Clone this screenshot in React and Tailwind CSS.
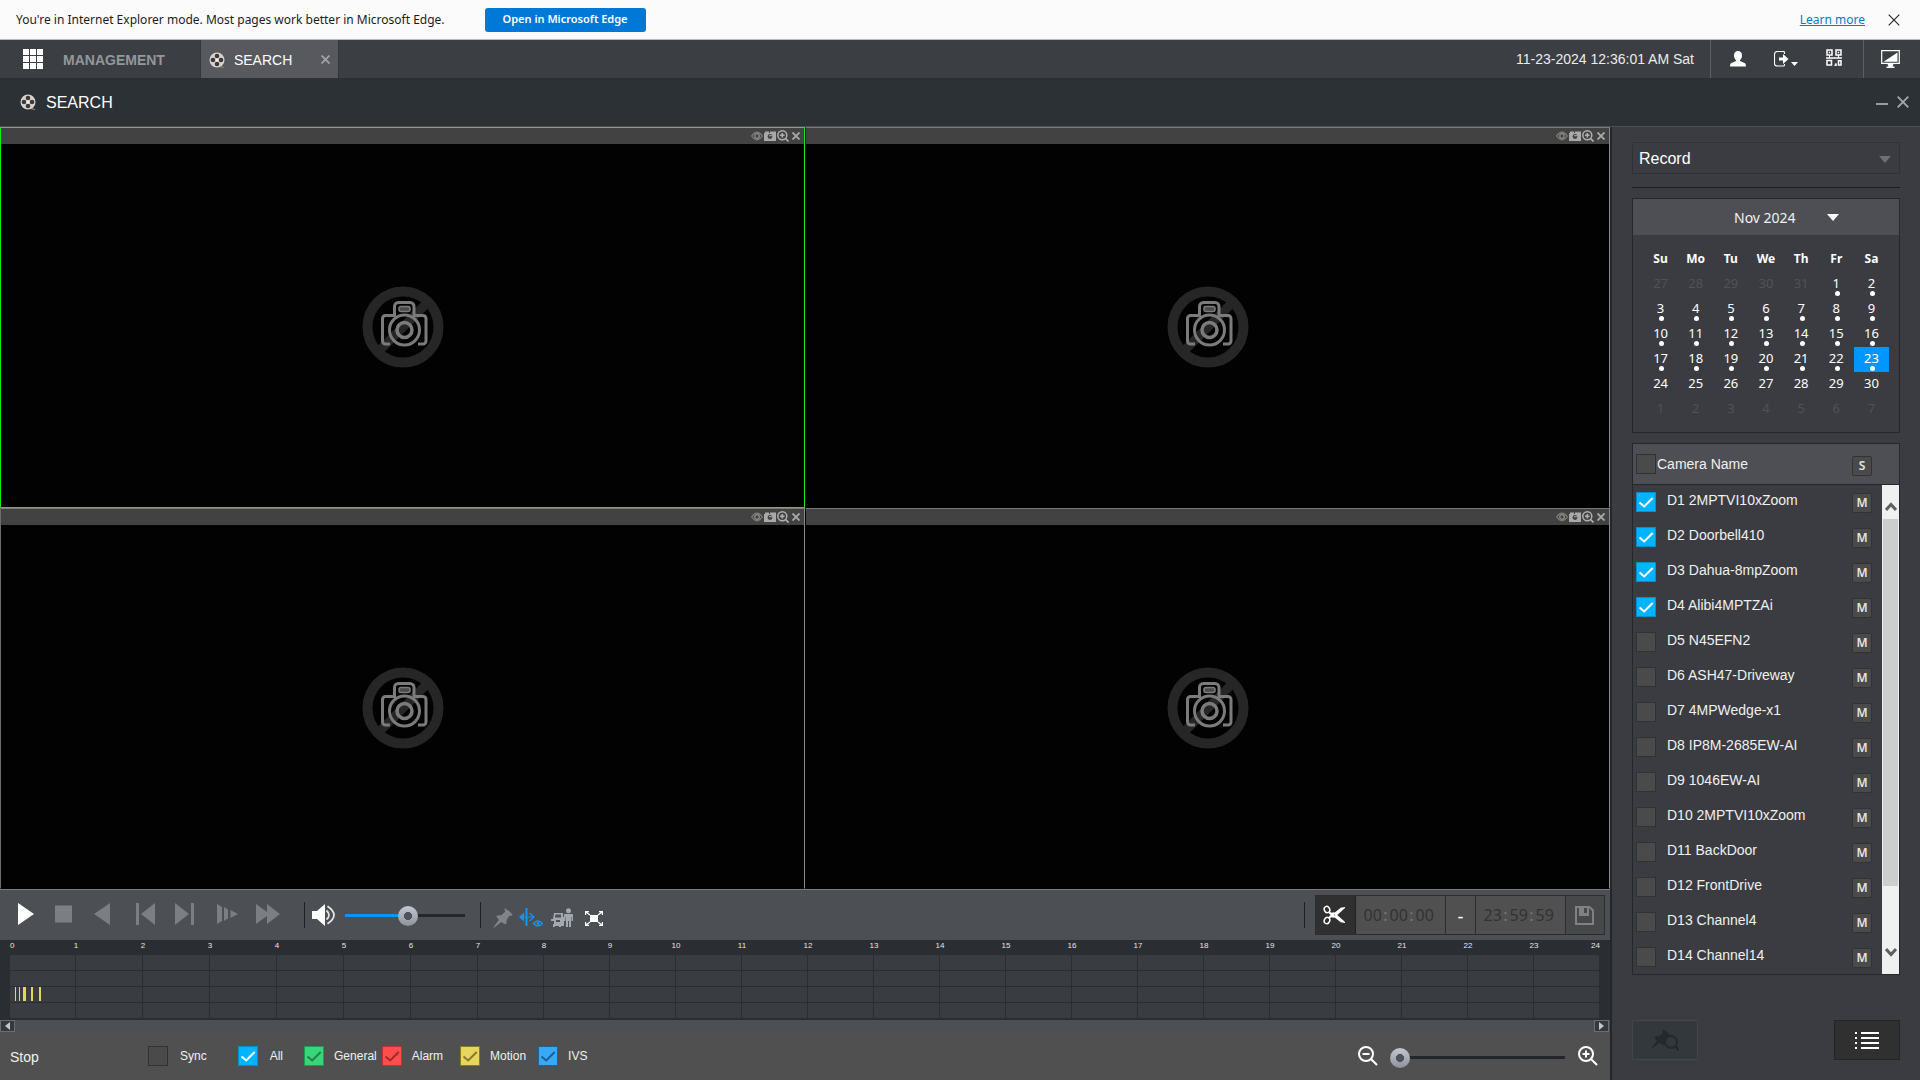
import React, { useState } from "react";

const CAMERAS = [
  "D1 2MPTVI10xZoom",
  "D2 Doorbell410",
  "D3 Dahua-8mpZoom",
  "D4 Alibi4MPTZAi",
  "D5 N45EFN2",
  "D6 ASH47-Driveway",
  "D7 4MPWedge-x1",
  "D8 IP8M-2685EW-AI",
  "D9 1046EW-AI",
  "D10 2MPTVI10xZoom",
  "D11 BackDoor",
  "D12 FrontDrive",
  "D13 Channel4",
  "D14 Channel14",
];

const WEEKS = [
  [27, 28, 29, 30, 31, 1, 2],
  [3, 4, 5, 6, 7, 8, 9],
  [10, 11, 12, 13, 14, 15, 16],
  [17, 18, 19, 20, 21, 22, 23],
  [24, 25, 26, 27, 28, 29, 30],
  [1, 2, 3, 4, 5, 6, 7],
];

const HOURS = Array.from({ length: 24 }, (_, i) => i);

function ReelIcon() {
  return (
    <svg width="17" height="17" viewBox="0 0 17 17" aria-hidden="true">
      <path d="M12 13.5l3.6 2.2-.6.6-4-1z" fill="#8d7a68" />
      <circle cx="8" cy="8" r="7.5" fill="#d4d4d4" />
      <g fill="#443630">
        <circle cx="8" cy="4" r="2.3" />
        <circle cx="8" cy="12" r="2.3" />
        <circle cx="4" cy="8" r="2.3" />
        <circle cx="12" cy="8" r="2.3" />
      </g>
      <circle cx="8" cy="8" r="1.5" fill="#f4f4f4" />
    </svg>
  );
}

function Cross({ size, width, className }) {
  return (
    <svg width={size} height={size} viewBox="0 0 12 12" className={className} aria-hidden="true">
      <path d="M.7 .7L11.3 11.3M11.3 .7L.7 11.3" stroke="currentColor" strokeWidth={width} fill="none" />
    </svg>
  );
}

function PinShape() {
  return (
    <path d="M11 .5c2 .1 6 2.600 8.500 6.500l-1.600 1-1.300-.4-3 4.500c.4 2-.2 3.600-1.200 4.400L8.200 14 1 19.800.4 19.300 5.800 12 3.300 8.300c1.300-1 3-1.200 4.700-.7l4.100-3.900-.2-1.400z" />
  );
}

function Check({ id, label, checked, box = "checked:bg-[#00b4ff] checked:border-[#0090cc]", tick = "#ffffff" }) {
  const [on, setOn] = useState(!!checked);
  return (
    <span className="grid size-5 shrink-0">
      <input
        id={id}
        type="checkbox"
        aria-label={label}
        checked={on}
        onChange={() => setOn(!on)}
        className={"col-start-1 row-start-1 size-5 appearance-none border border-[#323232] bg-[#4a4a4a] " + box}
      />
      {on && (
        <svg viewBox="0 0 20 20" className="pointer-events-none col-start-1 row-start-1 size-5" aria-hidden="true">
          <path d="M3.500 10.500l4.700 4 8.500-8.500" fill="none" stroke={tick} strokeWidth="2" />
        </svg>
      )}
    </span>
  );
}

function NoVideo() {
  return (
    <svg width="82" height="82" viewBox="0 0 82 82" aria-hidden="true">
      <circle cx="41" cy="41" r="35.500" fill="none" stroke="#262626" strokeWidth="10" />
      <path d="M17 65L66 16" stroke="#262626" strokeWidth="9" />
      <g fill="none" stroke="#7b7b7b" strokeWidth="3">
        <path d="M28 58h-4.500a3 3 0 0 1-3-3V32.500a3 3 0 0 1 3-3h9v-9a4 4 0 0 1 4-4h11.500a4 4 0 0 1 4 4v9h9a3 3 0 0 1 3 3V55a3 3 0 0 1-3 3H56" />
        <rect x="37" y="20.500" width="11" height="5" rx="2" fill="#4b4b4b" strokeWidth="1.500" />
        <circle cx="42.500" cy="44" r="15" />
        <circle cx="42.500" cy="44" r="7.500" strokeWidth="3.500" />
      </g>
    </svg>
  );
}

function VideoCell({ active, edge = "border-l-[#020202]" }) {
  return (
    <section
      className={
        "flex min-h-0 flex-col border bg-[#020202] " +
        (active ? "border-[#12f012]" : "border-t-[#78787a] border-r-[#8a8a8a] border-b-[#020202] " + edge)
      }
    >
      <header className="flex h-4 shrink-0 items-center justify-end gap-px bg-[#424242] pr-1 text-[#a0a0a0]">
        <button aria-label="Fisheye">
          <svg width="12" height="10" viewBox="0 0 12 10" className="block">
            <path d="M.6 5Q6-2.600 11.400 5 6 12.600.6 5z" fill="none" stroke="#7c7c7c" strokeWidth="1.200" />
            <circle cx="6" cy="5" r="2.300" fill="none" stroke="#8f8f7c" strokeWidth="1.300" />
          </svg>
        </button>
        <button aria-label="Snapshot">
          <svg width="12" height="10" viewBox="0 0 12 10" className="block">
            <path d="M0 2h1V.5h4V2h1V.5h6V10H0z" fill="#a9a9a9" />
            <circle cx="6" cy="5.500" r="2.400" fill="#424242" />
            <path d="M5 4.200h3v1H5z" fill="#a9a9a9" />
          </svg>
        </button>
        <button aria-label="Zoom">
          <svg width="12" height="12" viewBox="0 0 12 12" className="block">
            <circle cx="5.300" cy="5.300" r="4.500" fill="none" stroke="#b0b0b0" strokeWidth="1.500" />
            <path d="M3 5.300h4.600M5.300 3v4.600M8.500 8.500l3 3" stroke="#b0b0b0" strokeWidth="1.600" />
          </svg>
        </button>
        <button aria-label="Close" className="pl-[2px]">
          <Cross size={8} width={2.8} className="block text-[#a9a9a9]" />
        </button>
      </header>
      <div className="flex flex-1 items-center justify-center pt-[3px]">
        <NoVideo />
      </div>
    </section>
  );
}

function EdgeBar() {
  return (
    <div className="flex h-10 shrink-0 items-center border-b border-[#b9b9b9] bg-[#fbfbfb] pl-4 font-['Noto_Sans',sans-serif] text-[12px] text-[#1b1b1b]">
      <span>You're in Internet Explorer mode. Most pages work better in Microsoft Edge.</span>
      <button className="ml-10 h-6 w-[161px] rounded-[3px] bg-[#0078d7] text-[11px] font-semibold text-white">
        Open in Microsoft Edge
      </button>
      <a href="#learn" className="ml-auto text-[#0a78c8] underline">
        Learn more
      </a>
      <button aria-label="Dismiss" className="mr-5 ml-[23px] text-[#222]">
        <Cross size={12} width={1.1} className="block" />
      </button>
    </div>
  );
}

function NavBar() {
  return (
    <nav className="flex h-[38px] shrink-0 items-stretch bg-[#3b3f43] text-[14px]">
      <button aria-label="Menu" className="ml-[23px]">
        <svg width="20" height="20" viewBox="0 0 20 20" fill="#fff">
          {[0, 7, 14].map((y) => [0, 7, 14].map((x) => <rect key={x + "-" + y} x={x} y={y} width="6" height="6" />))}
        </svg>
      </button>
      <button className="ml-5 pt-0.5 font-bold text-[#92979b]">MANAGEMENT</button>
      <div className="ml-[35px] flex w-[139px] items-center border-r border-l border-[#33363a] bg-[#58595e] px-2 pt-0.5">
        <ReelIcon />
        <span className="ml-2 text-white">SEARCH</span>
        <button aria-label="Close tab" className="mb-0.5 ml-auto text-[#a2a3a6]">
          <Cross size={9} width={2.4} className="block" />
        </button>
      </div>
      <time className="ml-auto self-center pr-4 text-[#ececec]">11-23-2024 12:36:01 AM Sat</time>
      <div className="flex w-[153px] items-center justify-between border-l border-[#5c6064] pr-[21px] pl-[19px]">
        <button aria-label="User">
          <svg width="16" height="16" viewBox="0 0 16 16" fill="#fff" className="block">
            <path d="M8 0c2.500 0 4 1.700 4 4.200 0 2.400-1 4.100-2 4.900v1l5 2.200c.7.500 1 1.500 1 3.200H0c0-1.700.3-2.700 1-3.200l5-2.200v-1C5 8.300 4 6.600 4 4.200 4 1.700 5.500 0 8 0z" />
          </svg>
        </button>
        <button aria-label="Log out">
          <svg width="24" height="16" viewBox="0 0 24 16" className="block">
            <path d="M10.500 3V1.500q0-1-1-1h-6q-3 0-3 3v9q0 2.500 3 2.500h6q1 0 1-1v-1" fill="none" stroke="#fff" strokeWidth="1.100" />
            <path d="M5 6.500h4V3l5.500 5L9 13V9.500H5zM17 11h7l-3.500 4z" fill="#fff" />
          </svg>
        </button>
        <button aria-label="QR code" className="mb-1">
          <svg width="16" height="17" viewBox="0 0 16 17" className="block" fill="none" stroke="#fff" strokeWidth="1.500">
            <path d="M1 1h5v5H1zM10 1h5v5h-5zM1 11.500h4.500V16H1zM0 9h16M8.500 16.200h1.500v-2M12.500 11.700H15V16h-2.500z" />
            <path d="M2.700 2.700h1.500v1.500H2.700zM11.700 2.700h1.500v1.500h-1.500z" fill="#fff" stroke="none" />
            <path d="M3.500 6v3M12.500 6v3" strokeWidth="1" />
          </svg>
        </button>
      </div>
      <button aria-label="Display" className="border-l border-[#5c6064] pr-5 pl-[17px]">
        <svg width="19" height="19" viewBox="0 0 19 19" className="block">
          <path d="M.7.7h17.600v12.600H.7z" fill="none" stroke="#fff" strokeWidth="1.200" />
          <path d="M16.500 2.500v9.300h-14zM6.500 14h6l-1 2.500h2V18h-8v-1.500h2z" fill="#fff" />
        </svg>
      </button>
    </nav>
  );
}

function TitleBar() {
  return (
    <div className="flex h-12 shrink-0 items-center bg-[#2c3135] pl-5">
      <ReelIcon />
      <h1 className="ml-[9px] pt-0.5 text-[16px] text-white">SEARCH</h1>
      <button aria-label="Minimize" className="mt-1 ml-auto">
        <svg width="12" height="2" className="block">
          <rect width="12" height="2" fill="#9a9ca0" />
        </svg>
      </button>
      <button aria-label="Close" className="mr-[11px] ml-[9px] text-[#a4a6a9]">
        <Cross size={12} width={1.9} className="block" />
      </button>
    </div>
  );
}

function IconButton({ label, w, h = 22, className = "", fill = "#7b7e82", children }) {
  return (
    <button aria-label={label} className={"shrink-0 " + className}>
      <svg width={w} height={h} viewBox={"0 0 " + w + " " + h} fill={fill} className="block">
        {children}
      </svg>
    </button>
  );
}

const SLIDER =
  "h-5 appearance-none bg-transparent [&::-webkit-slider-runnable-track]:h-[3px] [&::-webkit-slider-thumb]:-mt-2 [&::-webkit-slider-thumb]:size-5 [&::-webkit-slider-thumb]:appearance-none [&::-webkit-slider-thumb]:rounded-full [&::-webkit-slider-thumb]:bg-[radial-gradient(circle,#4d525d_0_4px,transparent_4px),linear-gradient(#c3c7cf,#8d929c)]";

function TimeField({ label, value }) {
  const parts = value.split(":");
  return (
    <div role="group" aria-label={label} className="flex w-[90px] items-center justify-center border-r border-[#2b2d30] pr-1 font-['Noto_Sans',sans-serif] text-[16px]">
      {parts.map((p, i) => (
        <React.Fragment key={i}>
          {i > 0 && <span className="w-2 text-center text-[#787878]">:</span>}
          <input aria-label={label + " part " + (i + 1)} defaultValue={p} className="w-[18px] bg-transparent text-center text-[#333]" />
        </React.Fragment>
      ))}
    </div>
  );
}

function Controls() {
  return (
    <div className="flex h-[50px] shrink-0 items-center bg-[#4c5055] pr-[5px] pl-[18px]">
      <div className="mt-[-3px] flex items-center">
        <IconButton label="Play" w={16} fill="#fff"><path d="M0 0l16 11L0 22z" /></IconButton>
        <IconButton label="Stop" w={17} className="ml-[21px]"><path d="M0 2.500h17v17H0z" /></IconButton>
        <IconButton label="Play backward" w={16} className="ml-[22px]"><path d="M16 0L0 11l16 11z" /></IconButton>
        <IconButton label="Previous frame" w={19} className="ml-[26px]"><path d="M0 0h3v22H0zM19 0L5 11l14 11z" /></IconButton>
        <IconButton label="Next frame" w={19} className="ml-5"><path d="M16 0h3v22h-3zM0 0l14 11L0 22z" /></IconButton>
        <IconButton label="Slow" w={21} className="ml-[23px]"><path d="M0 1l5 3v14l-5 3zM7 4l4 2.500v9L7 18zM13.500 7l7.500 4-7.500 4z" /></IconButton>
        <IconButton label="Fast" w={24} className="ml-[18px]"><path d="M0 1l11 8V1l13 10-13 10v-8L0 21z" /></IconButton>
      </div>
      <div className="ml-6 h-[26px] w-px bg-[#1e2024]" />
      <IconButton label="Mute" w={24} className="ml-[7px]" fill="#fff">
        <path d="M0 7h5l8-7v22l-8-7H0z" />
        <path d="M14.500 6.500q5 4.500 0 9M15.500 2.200q13 8.800 0 17.600" fill="none" stroke="#e4e4e4" strokeWidth="1.800" />
      </IconButton>
      <input
        type="range"
        aria-label="Volume"
        defaultValue="53"
        className={SLIDER + " ml-[9px] w-[120px] [&::-webkit-slider-runnable-track]:bg-[linear-gradient(to_right,#0096ff_53%,#24272b_53%)]"}
      />
      <div className="ml-[15px] h-[26px] w-px bg-[#1e2024]" />
      <div className="mt-[6px] flex items-center">
        <IconButton label="Mark" w={20} h={20} className="ml-3" fill="#81858b"><PinShape /></IconButton>
        <IconButton label="Fine tune" w={24} h={20} className="ml-[6px]" fill="#0d97f5">
          <path d="M6.500 0h2v18h-2zM0 9l5-4.500v9z" />
          <path d="M4 9h2.500M8.500 9H14M10.500 5l4.500 4-4.500 4" fill="none" stroke="#0d97f5" strokeWidth="1.200" />
          <path d="M14.500 15.500q4.500-5 9 0-4.500 5-9 0z" fill="none" stroke="#0d97f5" strokeWidth="1.500" />
          <circle cx="19" cy="15.500" r="1.500" />
        </IconButton>
        <IconButton label="Target filter" w={23} h={20} className="ml-2" fill="#a3a7b0">
          <path d="M3 5h9v4h1v9h-3v1H8v-1H4v1H2v-3h1v-3H0v-2h2zM4.500 6.500L4 9.500h6v-3zM5 12v2h4v-2z" fillRule="evenodd" />
          <circle cx="17.500" cy="2.700" r="2.500" />
          <path d="M14 6h7q1 0 1 1v6h-1.500V9H20v10h-2v-6h-1v6h-2V9h-.5v4H13V7q0-1 1-1z" />
        </IconButton>
        <IconButton label="Full screen" w={18} h={15} className="ml-[11px]" fill="#fff">
          <path d="M5 4h8v7H5z" />
          <path d="M.6 4V.6H4M14 .6h3.400V4M17.400 11v3.400H14M4 14.400H.6V11M1 1l4 3M17 1l-4 3M17 14l-4-3M1 14l4-3" fill="none" stroke="#fff" strokeWidth="1.200" />
        </IconButton>
      </div>
      <div className="ml-auto h-[26px] w-px bg-[#1e2024]" />
      <div className="ml-[10px] flex h-10 border border-[#2b2d30] bg-[#505050]">
        <button aria-label="Clip" className="flex w-10 items-center justify-center border-r border-[#222] bg-[#303030] pr-1">
          <svg width="22" height="20" viewBox="0 0 22 20" fill="none" stroke="#fff" className="block">
            <ellipse cx="4" cy="4.500" rx="2.700" ry="3.200" strokeWidth="1.500" transform="rotate(-25 4 4.500)" />
            <ellipse cx="4" cy="15.500" rx="2.700" ry="3.200" strokeWidth="1.500" transform="rotate(25 4 15.500)" />
            <path d="M6 7l3 3-3 3" strokeWidth="2" />
            <path d="M8 8.500L18 16.500l3 .5-10-9zM8 11.500L18 3.500l3-.5-10 9z" fill="#fff" strokeWidth="1.500" />
          </svg>
        </button>
        <TimeField label="Start time" value="00:00:00" />
        <span className="flex w-[30px] items-center justify-center border-r border-[#2b2d30] pt-1 text-[18px] text-white">-</span>
        <TimeField label="End time" value="23:59:59" />
        <button aria-label="Save clip" className="flex w-[38px] items-center justify-center bg-[#46484a] pr-[2px]">
          <svg width="19" height="19" viewBox="0 0 19 19" className="block">
            <path d="M1 1h13.500L18 4.500V18H1z" fill="none" stroke="#7f8183" strokeWidth="2" />
            <path d="M4 0h10v10H4zM9 2v5h3V2z" fill="#7f8183" fillRule="evenodd" />
          </svg>
        </button>
      </div>
    </div>
  );
}

const COLS = "grid grid-cols-[66fr_repeat(6,67fr)_repeat(17,66fr)]";

function Timeline() {
  return (
    <div className="h-20 shrink-0 bg-[#2a2d31] px-[10px]">
      <div className={COLS + " h-[15px] text-[8px] leading-[11px] text-[#e6e6e6]"}>
        {HOURS.map((h) => (
          <span key={h} className="flex justify-between">
            <span className={h === 0 ? "" : "-ml-2 w-4 text-center"}>{h}</span>
            {h === 23 && <span>24</span>}
          </span>
        ))}
      </div>
      {[0, 1, 2, 3].map((row) => (
        <div key={row} className={COLS + " relative mb-px h-[15px]"}>
          {HOURS.map((h) => (
            <div key={h} className="border-r border-[#2a2d31] bg-[#393c41]" />
          ))}
          {row === 2 && (
            <div className="absolute inset-y-0 left-[5px] flex h-[14px] text-[#e8d455]">
              <i className="w-px bg-current" />
              <i className="ml-[3px] w-px bg-current" />
              <i className="ml-[3px] w-[3px] bg-current" />
              <i className="ml-[5px] w-[2px] bg-current" />
              <i className="ml-[6px] w-[2px] bg-current" />
            </div>
          )}
        </div>
      ))}
    </div>
  );
}

function TimelineScroll() {
  const box = "flex h-3 w-[15px] items-center justify-center border border-[#6a6d71] bg-[#35383c]";
  return (
    <div className="flex h-3 shrink-0 justify-between bg-[#4c5055] pr-px">
      <button aria-label="Scroll left" className={box}>
        <svg width="5" height="8"><path d="M5 0v8L0 4z" fill="#c4c7ca" /></svg>
      </button>
      <button aria-label="Scroll right" className={box}>
        <svg width="5" height="8"><path d="M0 0v8l5-4z" fill="#c4c7ca" /></svg>
      </button>
    </div>
  );
}

const FILTERS = [
  { name: "All", ml: "ml-[31px]", gap: "ml-3", box: "checked:bg-[#00b4ff] checked:border-[#0090cc]", tick: "#ffffff" },
  { name: "General", ml: "ml-[21px]", gap: "ml-[10px]", box: "checked:bg-[#37d67a] checked:border-[#1f9c54]", tick: "#1f8048" },
  { name: "Alarm", ml: "ml-[5px]", gap: "ml-[10px]", box: "checked:bg-[#ff4d4d] checked:border-[#c23030]", tick: "#9c2b2b" },
  { name: "Motion", ml: "ml-[17px]", gap: "ml-[10px]", box: "checked:bg-[#e8d560] checked:border-[#8a7a1c]", tick: "#857832" },
  { name: "IVS", ml: "ml-3", gap: "ml-[10px]", box: "checked:bg-[#3aa9f5] checked:border-[#1464a0]", tick: "#1a5f95" },
];

function StatusBar() {
  return (
    <footer className="flex h-12 shrink-0 items-center bg-[#505050] pr-3 pl-[10px] text-[12px] text-[#f0f0f0]">
      <output className="w-[138px] pt-0.5 text-[14px]">Stop</output>
      <Check id="f-sync" />
      <label htmlFor="f-sync" className="ml-3">Sync</label>
      {FILTERS.map((f) => (
        <div key={f.name} className={"flex items-center " + f.ml}>
          <Check id={"f-" + f.name} checked box={f.box} tick={f.tick} />
          <label htmlFor={"f-" + f.name} className={f.gap}>{f.name}</label>
        </div>
      ))}
      <button aria-label="Zoom out" className="ml-auto">
        <svg width="20" height="20" viewBox="0 0 20 20" fill="none" stroke="#fff" strokeWidth="2" className="block">
          <circle cx="8" cy="8" r="7" /><path d="M4.500 8h7M13 13l6 6" />
        </svg>
      </button>
      <input
        type="range"
        aria-label="Timeline zoom"
        defaultValue="0"
        className={SLIDER + " mt-[2px] ml-3 w-[175px] [&::-webkit-slider-runnable-track]:bg-[#23262c]"}
      />
      <button aria-label="Zoom in" className="ml-[13px]">
        <svg width="20" height="20" viewBox="0 0 20 20" fill="none" stroke="#fff" strokeWidth="2" className="block">
          <circle cx="8" cy="8" r="7" /><path d="M4.500 8h7M8 4.500v7M13 13l6 6" />
        </svg>
      </button>
    </footer>
  );
}

function Calendar() {
  return (
    <section className="mt-[10px] h-[235px] shrink-0 border border-[#24272b] font-['Noto_Sans',sans-serif]">
      <button className="flex h-9 w-full items-center bg-[#4d4f54] pl-[101px] text-[14px] text-[#f2f2f2]">
        Nov 2024
        <svg width="12" height="7" className="ml-[31px]"><path d="M0 0h12L6 7z" fill="#fff" /></svg>
      </button>
      <table className="mt-[9px] ml-[10px] w-[246px] table-fixed border-collapse text-center text-[13px] text-white">
        <thead>
          <tr>
            {["Su", "Mo", "Tu", "We", "Th", "Fr", "Sa"].map((d) => (
              <th key={d} className="h-[28px] p-0 pt-0.5 text-[12px] font-bold">{d}</th>
            ))}
          </tr>
        </thead>
        <tbody>
          {WEEKS.map((week, r) => (
            <tr key={r}>
              {week.map((day, c) => {
                const outside = (r === 0 && c < 5) || r === 5;
                const dot = !outside && r < 4;
                const selected = r === 3 && c === 6;
                return (
                  <td key={c} className={"h-[25px] p-0 " + (selected ? "bg-[#0096ff]" : "")}>
                    <button className={"relative block h-[25px] w-full pb-[3px] leading-[22px] " + (outside ? "text-[#505257]" : "")}>
                      {day}
                      {dot && <i className="absolute bottom-[1px] left-4 size-[5px] rounded-full bg-white" />}
                    </button>
                  </td>
                );
              })}
            </tr>
          ))}
        </tbody>
      </table>
    </section>
  );
}

function Stream({ children }) {
  return (
    <button className="size-5 shrink-0 rounded-[2px] border border-[#333] bg-[#4a4a4a] font-['Noto_Sans',sans-serif] text-[12px] leading-[18px] font-semibold text-[#e4e4e4]">
      {children}
    </button>
  );
}

function CameraList() {
  return (
    <section className="mt-[10px] flex h-[532px] shrink-0 flex-col border border-[#24272b] text-[14px] text-[#f0f0f0]">
      <header className="flex h-[41px] shrink-0 items-center border-b border-[#24272b] bg-[#4d4f54] pr-[27px] pl-[3px]">
        <Check id="cam-all" />
        <label htmlFor="cam-all" className="ml-px flex-1 pt-px">Camera Name</label>
        <div className="mt-1 flex"><Stream>S</Stream></div>
      </header>
      <div className="flex min-h-0 flex-1">
        <ul className="flex-1 overflow-hidden">
          {CAMERAS.map((name, i) => (
            <li key={name} className="flex h-[35px] items-start pt-[7px] pr-[10px] pl-[3px]">
              <Check id={"cam-" + i} checked={i < 4} />
              <label htmlFor={"cam-" + i} className="ml-[11px] flex-1 leading-4">{name}</label>
              <div className="mt-px flex"><Stream>M</Stream></div>
            </li>
          ))}
        </ul>
        <div className="flex w-[17px] flex-col bg-[#f0f0f0]">
          <button aria-label="Scroll up" className="flex h-[34px] items-center justify-center pt-2">
            <svg width="12" height="9"><path d="M1 8l5-5.500L11 8" fill="none" stroke="#606060" strokeWidth="3" /></svg>
          </button>
          <div className="mx-px h-[367px] bg-[#cdcdcd]" />
          <button aria-label="Scroll down" className="mt-auto flex h-[34px] items-start justify-center pt-2">
            <svg width="12" height="9"><path d="M1 1l5 5.500L11 1" fill="none" stroke="#606060" strokeWidth="3" /></svg>
          </button>
        </div>
      </div>
    </section>
  );
}

function Sidebar() {
  return (
    <aside className="flex w-[310px] shrink-0 flex-col border-l-2 border-[#23262a] bg-[#3a3c41] px-5 pt-[15px]">
      <div className="grid h-8 shrink-0 items-center">
        <select
          aria-label="Record type"
          className="col-start-1 row-start-1 h-8 w-full appearance-none border border-[#303236] bg-[#3a3c41] px-[6px] pt-0.5 text-[16px] leading-[28px] text-white"
        >
          <option>Record</option>
          <option>Picture</option>
        </select>
        <svg width="12" height="7" className="pointer-events-none col-start-1 row-start-1 mt-0.5 mr-[9px] justify-self-end">
          <path d="M0 0h12L6 7z" fill="#6c6f74" />
        </svg>
      </div>
      <hr className="mt-[13px] border-t border-[#1b1d20]" />
      <Calendar />
      <CameraList />
      <div className="mt-[45px] flex justify-between">
        <button aria-label="Mark search" className="flex h-10 w-[66px] items-center justify-center border border-[#42464b] bg-[#33383d]">
          <svg width="28" height="22" viewBox="0 0 28 22" className="block">
            <g fill="#25292d"><PinShape /></g>
            <circle cx="20" cy="13" r="6" fill="#33383d" stroke="#25292d" strokeWidth="2" />
            <path d="M24 17l4 4.500" stroke="#25292d" strokeWidth="2.500" />
          </svg>
        </button>
        <button aria-label="File list" className="flex h-10 w-[66px] items-center justify-center border border-[#242424] bg-[#303030]">
          <svg width="24" height="17" viewBox="0 0 24 17" fill="#fff" className="block">
            {[0, 5, 10, 15].map((y) => (
              <path key={y} d={"M0 " + y + "h2v2H0zM6 " + y + "h18v2H6z"} />
            ))}
          </svg>
        </button>
      </div>
    </aside>
  );
}

export default function App() {
  return (
    <div className="flex h-screen min-h-[640px] flex-col bg-[#2c3135] font-['Liberation_Sans',Arial,sans-serif]">
      <EdgeBar />
      <NavBar />
      <TitleBar />
      <div className="flex min-h-0 flex-1 border-t border-[#4b4f53]">
        <main className="flex min-w-0 flex-1 flex-col">
          <div className="grid min-h-0 flex-1 grid-cols-2 grid-rows-2 border-b border-[#7c7c7c]">
            <VideoCell active />
            <VideoCell />
            <VideoCell edge="border-l-[#6c6c6e]" />
            <VideoCell />
          </div>
          <Controls />
          <Timeline />
          <TimelineScroll />
          <StatusBar />
        </main>
        <Sidebar />
      </div>
    </div>
  );
}
